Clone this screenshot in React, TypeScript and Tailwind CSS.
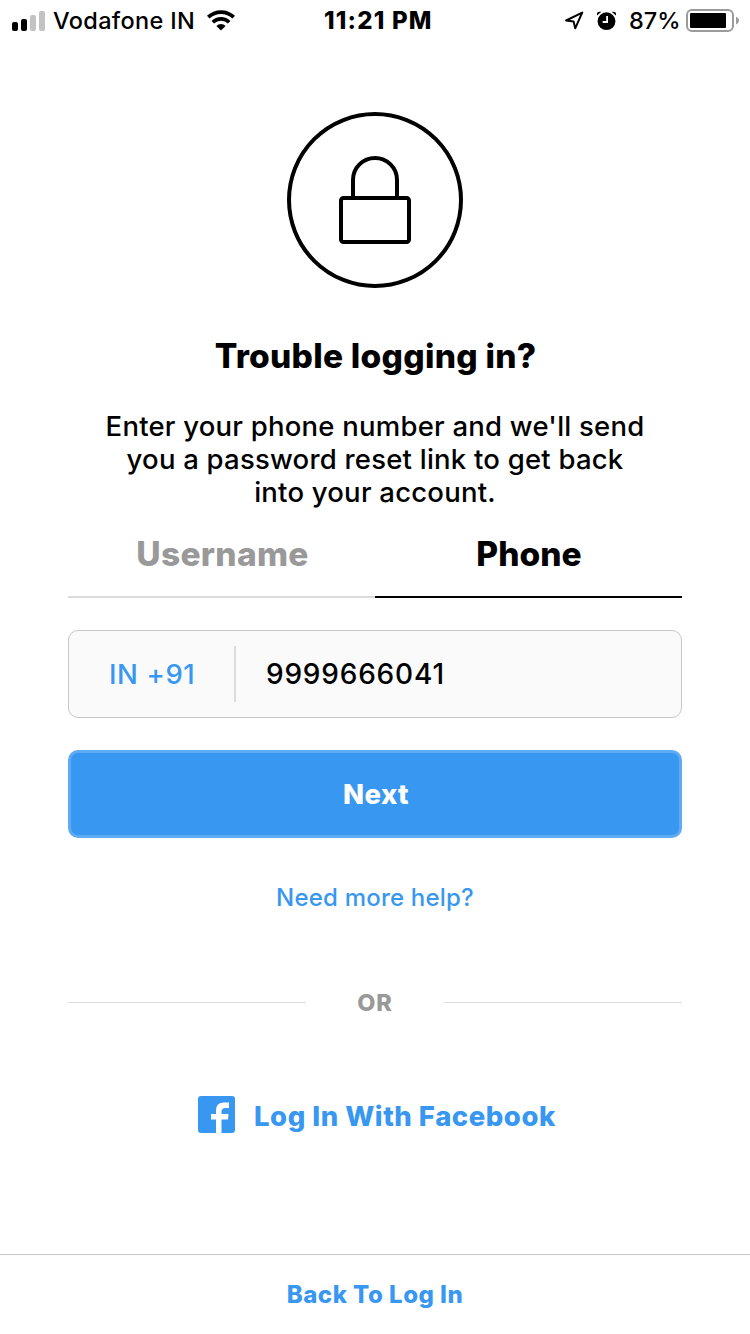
import React from "react";

function SignalBars() {
  return (
    <svg width="34" height="20" viewBox="0 0 34 20">
      <rect x="0" y="11" width="6" height="9" rx="2" fill="#000" />
      <rect x="9" y="8" width="6" height="12" rx="2" fill="#000" />
      <rect x="18" y="4" width="6" height="16" rx="2" fill="#c3c3c3" />
      <rect x="27" y="0" width="6" height="20" rx="2" fill="#c3c3c3" />
    </svg>
  );
}

function WifiIcon() {
  return (
    <svg className="overflow-visible" width="28" height="20" viewBox="0 0 28 20" fill="none" stroke="#000">
      <path d="M1.3 6.2A18.2 18.2 0 0 1 26.7 6.2" strokeWidth="3.8" />
      <path d="M5.8 11.2A11.7 11.7 0 0 1 22.2 11.2" strokeWidth="3.6" />
      <path d="M14 19.5L9.4 15A6.5 6.5 0 0 1 18.6 15Z" fill="#000" stroke="none" />
    </svg>
  );
}

function LocationIcon() {
  return (
    <svg width="20" height="20" viewBox="0 0 20 20" fill="none" stroke="#000" strokeWidth="2" strokeLinejoin="round">
      <path d="M17.2 1.6L1.2 9.5L8.6 10.4L10.2 17.4Z" />
    </svg>
  );
}

function AlarmIcon() {
  return (
    <svg width="20" height="20" viewBox="0 0 20 20" fill="none">
      <circle cx="9.5" cy="10.2" r="8.9" fill="#000" />
      <path d="M10.1 5V11H5.7" stroke="#fff" strokeWidth="1.8" />
      <path d="M0 4.6V3Q0 0.8 2.8 0.8H4.4ZM19 4.6V3Q19 0.8 16.2 0.8H14.6Z" fill="#000" />
    </svg>
  );
}

function BatteryIcon() {
  return (
    <svg width="54" height="24" viewBox="0 0 54 24">
      <rect x="1" y="1" width="46" height="21" rx="5" fill="none" stroke="#9b9b9b" strokeWidth="2" />
      <rect x="4" y="4" width="36" height="15" rx="1" fill="#000" />
      <path d="M50 7.5Q53 9.5 53 11.5T50 15.5Z" fill="#9b9b9b" />
    </svg>
  );
}

function LockBadge() {
  return (
    <svg width="176" height="176" viewBox="0 0 176 176" fill="none" stroke="#000" strokeWidth="4">
      <circle cx="88" cy="88" r="86" />
      <rect x="54" y="86" width="68" height="44" rx="2.5" />
      <path d="M66 86V68A22 22 0 0 1 110 68V86" />
    </svg>
  );
}

function FacebookIcon() {
  return (
    <svg width="38" height="38" viewBox="0 0 38 38">
      <rect x="0" y="0" width="37" height="37" rx="3" fill="#3897f0" />
      <path d="M18 37V23.5H13V18H18V14.5Q18 6.5 26 6.5H31V12H27.5Q23.5 12 23.5 15.5V18H30.5L30 23.5H23.5V37Z" fill="#fff" />
    </svg>
  );
}

export default function App() {
  return (
    <main className="flex h-[1334px] w-[750px] flex-col overflow-hidden bg-white font-['Inter',sans-serif] text-black">
      <header className="flex h-[41px] shrink-0 items-center pl-3 pr-[10px] text-[23.5px] font-medium leading-10">
        <div className="flex w-[312px] items-center">
          <SignalBars />
          <span className="ml-[7px] w-[142px] whitespace-nowrap tracking-[0.35px]">Vodafone IN</span>
          <span className="ml-3"><WifiIcon /></span>
        </div>
        <span className="whitespace-nowrap text-[24px] font-extrabold tracking-[1.2px]">11:21 PM</span>
        <div className="ml-auto flex items-center">
          <LocationIcon />
          <span className="ml-3"><AlarmIcon /></span>
          <span className="ml-3 w-[52px] whitespace-nowrap">87%</span>
          <span className="ml-[5px]"><BatteryIcon /></span>
        </div>
      </header>

      <section className="flex flex-1 flex-col px-[68px] pt-[71px]">
        <div className="flex justify-center"><LockBadge /></div>
        <h1 className="mt-[48px] pl-px text-center text-[33.5px] font-extrabold leading-[40px] tracking-[0.25px]">Trouble logging in?</h1>
        <p className="mt-[34px] text-center text-[27.5px] font-medium leading-[33px] tracking-[0.22px]">
          Enter your phone number and we'll send<br />you a password reset link to get back<br />into your account.
        </p>
        <nav className="mt-[25px] flex h-[64px] text-[33.5px] font-extrabold leading-[40px]">
          <button className="w-1/2 border-b-2 border-[#dbdbdb] pb-[22px] pl-0.5 tracking-[0.3px] text-[#999]">Username</button>
          <button className="w-1/2 border-b-2 border-black pb-[22px] pl-px">Phone</button>
        </nav>
        <div className="mt-8 flex h-[88px] items-center rounded-[10px] border border-[#c7c7c7] bg-[#fafafa] text-[27.5px] font-medium">
          <span className="w-[165px] pl-[40px] pt-0.5 tracking-[0.6px] text-[#3897f0]">IN +91</span>
          <span className="h-14 w-0.5 bg-[#dbdbdb]" />
          <span className="pb-px pl-[30px] text-[28px] tracking-[0.8px]">9999666041</span>
        </div>
        <button className="mt-8 h-[88px] rounded-[10px] border-[3px] border-[#5eabf3] bg-[#3897f0] pl-0.5 pt-0.5 text-[27.5px] font-extrabold tracking-[0.4px] text-white">Next</button>
        <a className="mt-[44px] text-center text-[24px] font-medium leading-8 tracking-[0.2px] text-[#3897f0]">Need more help?</a>
        <div className="mt-[72px] flex h-[32px] items-center justify-between">
          <span className="h-px w-[238px] bg-[#dbdbdb]" />
          <span className="pt-0.5 text-[23.5px] font-extrabold tracking-[0.8px] text-[#999]">OR</span>
          <span className="h-px w-[238px] bg-[#dbdbdb]" />
        </div>
        <button className="mt-[79px] flex h-[40px] items-center pl-[130px] text-[27.5px] font-extrabold text-[#3897f0]">
          <span className="-mt-1"><FacebookIcon /></span>
          <span className="ml-[18px] whitespace-nowrap tracking-[0.53px]">Log In With Facebook</span>
        </button>
      </section>

      <footer className="flex h-20 shrink-0 items-center justify-center border-t border-[#c7c7c7] text-[24px] font-extrabold tracking-[0.5px] text-[#3897f0]">
        <a>Back To Log In</a>
      </footer>
    </main>
  );
}
